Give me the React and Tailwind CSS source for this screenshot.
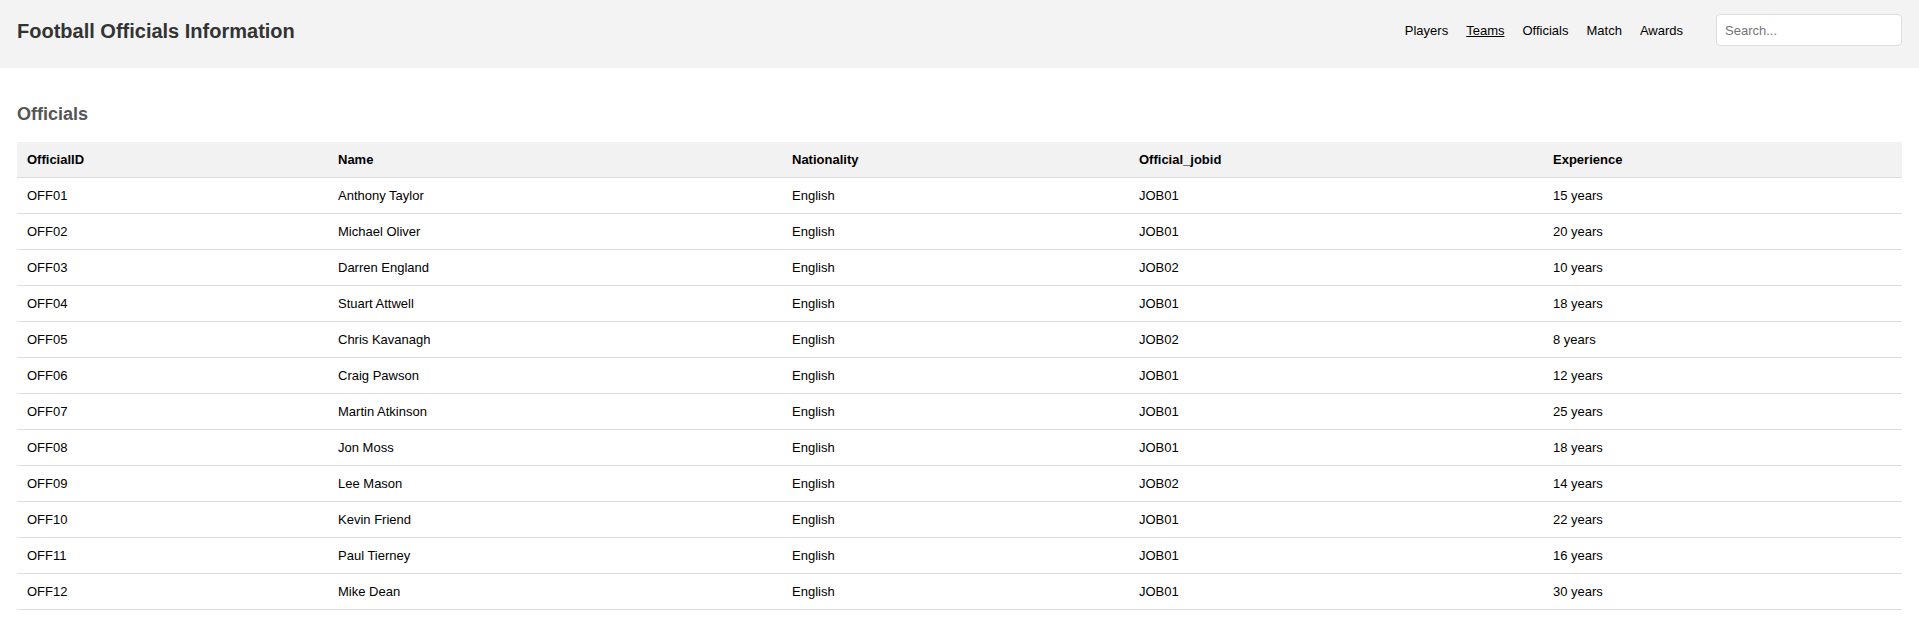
import React from 'react';

const officials = [
  ['OFF01', 'Anthony Taylor', 'English', 'JOB01', '15 years'],
  ['OFF02', 'Michael Oliver', 'English', 'JOB01', '20 years'],
  ['OFF03', 'Darren England', 'English', 'JOB02', '10 years'],
  ['OFF04', 'Stuart Attwell', 'English', 'JOB01', '18 years'],
  ['OFF05', 'Chris Kavanagh', 'English', 'JOB02', '8 years'],
  ['OFF06', 'Craig Pawson', 'English', 'JOB01', '12 years'],
  ['OFF07', 'Martin Atkinson', 'English', 'JOB01', '25 years'],
  ['OFF08', 'Jon Moss', 'English', 'JOB01', '18 years'],
  ['OFF09', 'Lee Mason', 'English', 'JOB02', '14 years'],
  ['OFF10', 'Kevin Friend', 'English', 'JOB01', '22 years'],
  ['OFF11', 'Paul Tierney', 'English', 'JOB01', '16 years'],
  ['OFF12', 'Mike Dean', 'English', 'JOB01', '30 years'],
];

const columns = ['OfficialID', 'Name', 'Nationality', 'Official_jobid', 'Experience'];
const widths = ['w-[311px]', 'w-[454px]', 'w-[347px]', 'w-[414px]', ''];

export default function App() {
  return (
    <div className="min-h-screen bg-white font-['Liberation_Sans',Arial,sans-serif] text-[13px] text-black">
      <header className="flex items-center justify-between bg-[#f3f3f3] px-[17px] pt-[14px] pb-[22px]">
        <h1 className="text-[20px] font-bold leading-[23px] text-[#333] mt-[2px]">Football Officials Information</h1>
        <div className="flex items-center">
          <nav className="flex items-center leading-[15px]">
            <a href="#" className="mx-[9px]">Players</a>
            <a href="#" className="mx-[9px] underline">Teams</a>
            <a href="#" className="mx-[9px]">Officials</a>
            <a href="#" className="mx-[9px]">Match</a>
            <a href="#" className="mx-[9px]">Awards</a>
          </nav>
          <input
            type="text"
            placeholder="Search..."
            className="ml-[24px] h-[32px] w-[186px] rounded-[4px] border border-[#ddd] bg-white px-[8px] text-[13px] placeholder:text-[#757575] outline-none"
          />
        </div>
      </header>

      <main className="px-[17px] pt-[36px]">
        <h2 className="text-[18px] font-bold leading-[21px] text-[#555] mb-[17px]">Officials</h2>
        <table className="w-full border-collapse">
          <thead>
            <tr className="bg-[#f2f2f2] border-b border-[#ddd]">
              {columns.map((c, i) => (
                <th key={c} className={`${widths[i]} px-[10px] py-[10px] text-left font-bold leading-[15px]`}>
                  {c}
                </th>
              ))}
            </tr>
          </thead>
          <tbody>
            {officials.map((row) => (
              <tr key={row[0]} className="border-b border-[#ddd]">
                {row.map((cell, i) => (
                  <td key={i} className="px-[10px] py-[10px] leading-[15px]">{cell}</td>
                ))}
              </tr>
            ))}
          </tbody>
        </table>
      </main>
    </div>
  );
}
